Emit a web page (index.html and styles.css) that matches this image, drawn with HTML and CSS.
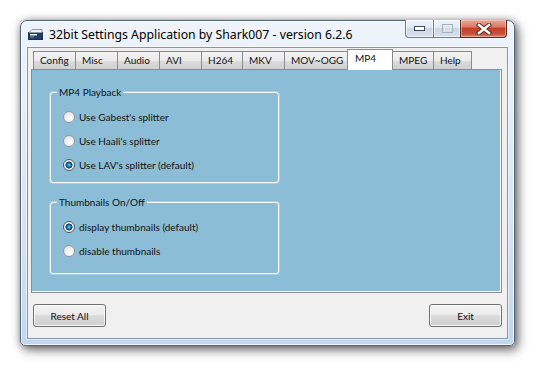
FILE: index.html
```html
<!DOCTYPE html>
<html>
<head>
<meta charset="utf-8">
<link rel="stylesheet" href="styles.css">
</head>
<body>
<div class="window">
  <div class="titlebar">
    <svg class="appicon" width="15" height="11" viewBox="0 0 15 11">
      <rect x="0.5" y="3.5" width="14" height="7" fill="#1f3e63" stroke="#16304f"/>
      <path d="M1 3.5 L4 0.5 L14 0.5 L14 3.5 Z" fill="#eef2f6" stroke="#8a98a8"/>
      <rect x="2" y="5" width="7" height="1.5" fill="#e8eef5"/>
      <rect x="2" y="7.5" width="4" height="1" fill="#7f9bbd"/>
    </svg>
    <span class="title">32bit Settings Application by Shark007 - version 6.2.6</span>
    <div class="caption">
      <span class="cb cb-min">
        <svg width="11" height="5" viewBox="0 0 11 5"><rect x="0.5" y="0.5" width="10" height="4" fill="#fff" stroke="#3a4a5c"/></svg>
      </span>
      <span class="cb cb-max">
        <svg width="11" height="9" viewBox="0 0 11 9"><rect x="0.5" y="0.5" width="10" height="8" fill="none" stroke="#a5b1bf"/><rect x="2.5" y="2.5" width="6" height="4" fill="none" stroke="#e4e9ef"/></svg>
      </span>
      <span class="cb cb-close">
        <svg width="16" height="12" viewBox="0 0 16 12">
          <path d="M3 2 L13 10 M13 2 L3 10" stroke="#5a3028" stroke-width="4.4" stroke-linecap="square"/>
          <path d="M3 2 L13 10 M13 2 L3 10" stroke="#ffffff" stroke-width="2.4" stroke-linecap="square"/>
        </svg>
      </span>
    </div>
  </div>
  <div class="client">
    <div class="tabctl">
      <div class="tabrow">
        <span class="tab w43">Config</span>
        <span class="tab w43">Misc</span>
        <span class="tab w43">Audio</span>
        <span class="tab w43">AVI</span>
        <span class="tab w42">H264</span>
        <span class="tab w43">MKV</span>
        <span class="tab w64">MOV~OGG</span>
        <span class="tab tab-sel">MP4</span>
        <span class="tab w42">MPEG</span>
        <span class="tab w39">Help</span>
      </div>
      <div class="page">
        <div class="group group-play">
          <span class="legend">MP4 Playback</span>
          <div class="opt"><span class="radio"></span>Use Gabest's splitter</div>
          <div class="opt"><span class="radio"></span>Use Haali's splitter</div>
          <div class="opt"><span class="radio checked"></span>Use LAV's splitter (default)</div>
        </div>
        <div class="group group-thumb">
          <span class="legend">Thumbnails On/Off</span>
          <div class="opt"><span class="radio checked"></span>display thumbnails (default)</div>
          <div class="opt"><span class="radio"></span>disable thumbnails</div>
        </div>
      </div>
    </div>
    <div class="btnrow">
      <span class="btn">Reset All</span>
      <span class="btn">Exit</span>
    </div>
  </div>
</div>
</body>
</html>
```

FILE: styles.css
```css
html, body {
  margin: 0;
  padding: 0;
  background: #ffffff;
}

body {
  width: 536px;
  height: 368px;
  overflow: hidden;
  font-family: "Lato", "Liberation Sans", sans-serif;
  font-size: 10px;
  color: #111;
}

.window {
  margin: 20px 0 0 20px;
  width: 495px;
  height: 326px;
  box-sizing: border-box;
  border: 1px solid #56677a;
  border-radius: 7px 7px 5px 5px;
  background: linear-gradient(to bottom, #eef4fa 0, #e4edf6 30%, #d2e2f2 70%, #c0d7ef 100%);
  box-shadow: 3px 4px 11px rgba(0, 0, 0, 0.55), 0 0 7px rgba(0, 0, 0, 0.3), inset 0 0 0 1px rgba(255, 255, 255, 0.75);
  padding: 0 6px 6px 6px;
  display: flex;
  flex-direction: column;
}

.titlebar {
  height: 26px;
  display: flex;
  align-items: center;
  flex: none;
}

.appicon {
  margin-left: 1px;
  margin-top: 1px;
  flex: none;
}

.title {
  margin-left: 6px;
  font-family: "Noto Sans", "Open Sans", sans-serif;
  font-size: 12.25px;
  color: #000;
  white-space: nowrap;
}

.caption {
  margin-left: auto;
  margin-right: 1px;
  align-self: flex-start;
  margin-top: -1px;
  display: flex;
  height: 18px;
}

.cb {
  height: 18px;
  box-sizing: border-box;
  display: flex;
  align-items: center;
  justify-content: center;
  border: 1px solid #6f7f92;
  border-top: none;
}

.cb-min {
  width: 28px;
  border-radius: 0 0 0 4px;
  border-right: none;
  background: linear-gradient(to bottom, #eef3f8 0, #e1e9f2 45%, #cbd7e4 50%, #d6e0eb 100%);
  box-shadow: inset 0 0 0 1px rgba(255, 255, 255, 0.6);
}

.cb-max {
  width: 27px;
  border-right: none;
  background: linear-gradient(to bottom, #eef3f8 0, #e1e9f2 45%, #cbd7e4 50%, #d6e0eb 100%);
  box-shadow: inset 0 0 0 1px rgba(255, 255, 255, 0.6);
}

.cb-close {
  width: 47px;
  border-radius: 0 0 4px 0;
  border-color: #5e2a20;
  background: linear-gradient(to bottom, #eaa899 0, #dc7a64 40%, #c43f2a 50%, #c84e38 80%, #da806a 100%);
  box-shadow: inset 0 0 0 1px rgba(255, 220, 210, 0.45);
}

.client {
  flex: 1;
  background: #f0f0f0;
  border: 1px solid #8797aa;
  box-shadow: 0 0 0 1px rgba(255, 255, 255, 0.55);
  display: flex;
  flex-direction: column;
}

.tabctl {
  margin: 1px 5px 0 3px;
  display: flex;
  flex-direction: column;
}

.tabrow {
  height: 20px;
  display: flex;
  padding-left: 2px;
  align-items: flex-end;
}

.tab {
  height: 18px;
  box-sizing: border-box;
  border: 1px solid #898c95;
  border-bottom: none;
  margin-right: -1px;
  padding-left: 6px;
  line-height: 17px;
  white-space: nowrap;
  background: linear-gradient(to bottom, #f3f3f3 0, #ebebeb 50%, #dddddd 50%, #cfcfcf 100%);
  flex: none;
}

.w43 { width: 43px; }
.w42 { width: 42px; }
.w64 { width: 64px; }
.w39 { width: 39px; }

.tab-sel {
  width: 46px;
  height: 21px;
  margin-bottom: -1px;
  padding-left: 7px;
  line-height: 17px;
  background: #ffffff;
  position: relative;
  z-index: 1;
}

.page {
  height: 224px;
  box-sizing: border-box;
  border: 1px solid #898c95;
  background: #8bbed6;
  box-shadow: inset -1px -1px 0 #ffffff;
  padding: 22px 0 0 18px;
}

.group {
  width: 229px;
  box-sizing: border-box;
  border: 1px solid #ffffff;
  border-radius: 3px;
  box-shadow: 0 0 0 1px rgba(255, 255, 255, 0.25);
  padding-left: 12px;
}

.group-play {
  height: 91px;
}

.group-thumb {
  height: 72px;
  margin-top: 19px;
}

.legend {
  display: block;
  width: fit-content;
  margin: -7px 0 0 -6px;
  padding: 0 2px;
  line-height: 13px;
  background: #8bbed6;
}

.legend + .opt {
  margin-top: 6px;
}

.opt {
  height: 24px;
  display: flex;
  align-items: center;
  white-space: nowrap;
}

.radio {
  width: 12px;
  height: 12px;
  box-sizing: border-box;
  border-radius: 50%;
  border: 1px solid #979a9f;
  background: radial-gradient(circle at 65% 70%, #ffffff 0, #f4f4f4 35%, #d8d8d8 100%);
  margin-right: 4px;
  flex: none;
}

.radio.checked {
  border-color: #4e5a66;
  background: radial-gradient(circle at 50% 50%, #7fd6f8 0, #2a94d0 1.3px, #0f4f86 2.6px, #153b62 3.3px, #f6f6f6 3.8px, #e4e4e4 100%);
}

.btnrow {
  display: flex;
  justify-content: space-between;
  padding: 0 5px;
  margin-top: 11px;
}

.btn {
  width: 73px;
  height: 23px;
  box-sizing: border-box;
  border: 1px solid #707070;
  border-radius: 3px;
  background: linear-gradient(to bottom, #f2f2f2 0, #ebebeb 50%, #dddddd 50%, #cfcfcf 100%);
  box-shadow: inset 0 0 0 1px rgba(255, 255, 255, 0.8);
  display: flex;
  align-items: center;
  justify-content: center;
}
```
